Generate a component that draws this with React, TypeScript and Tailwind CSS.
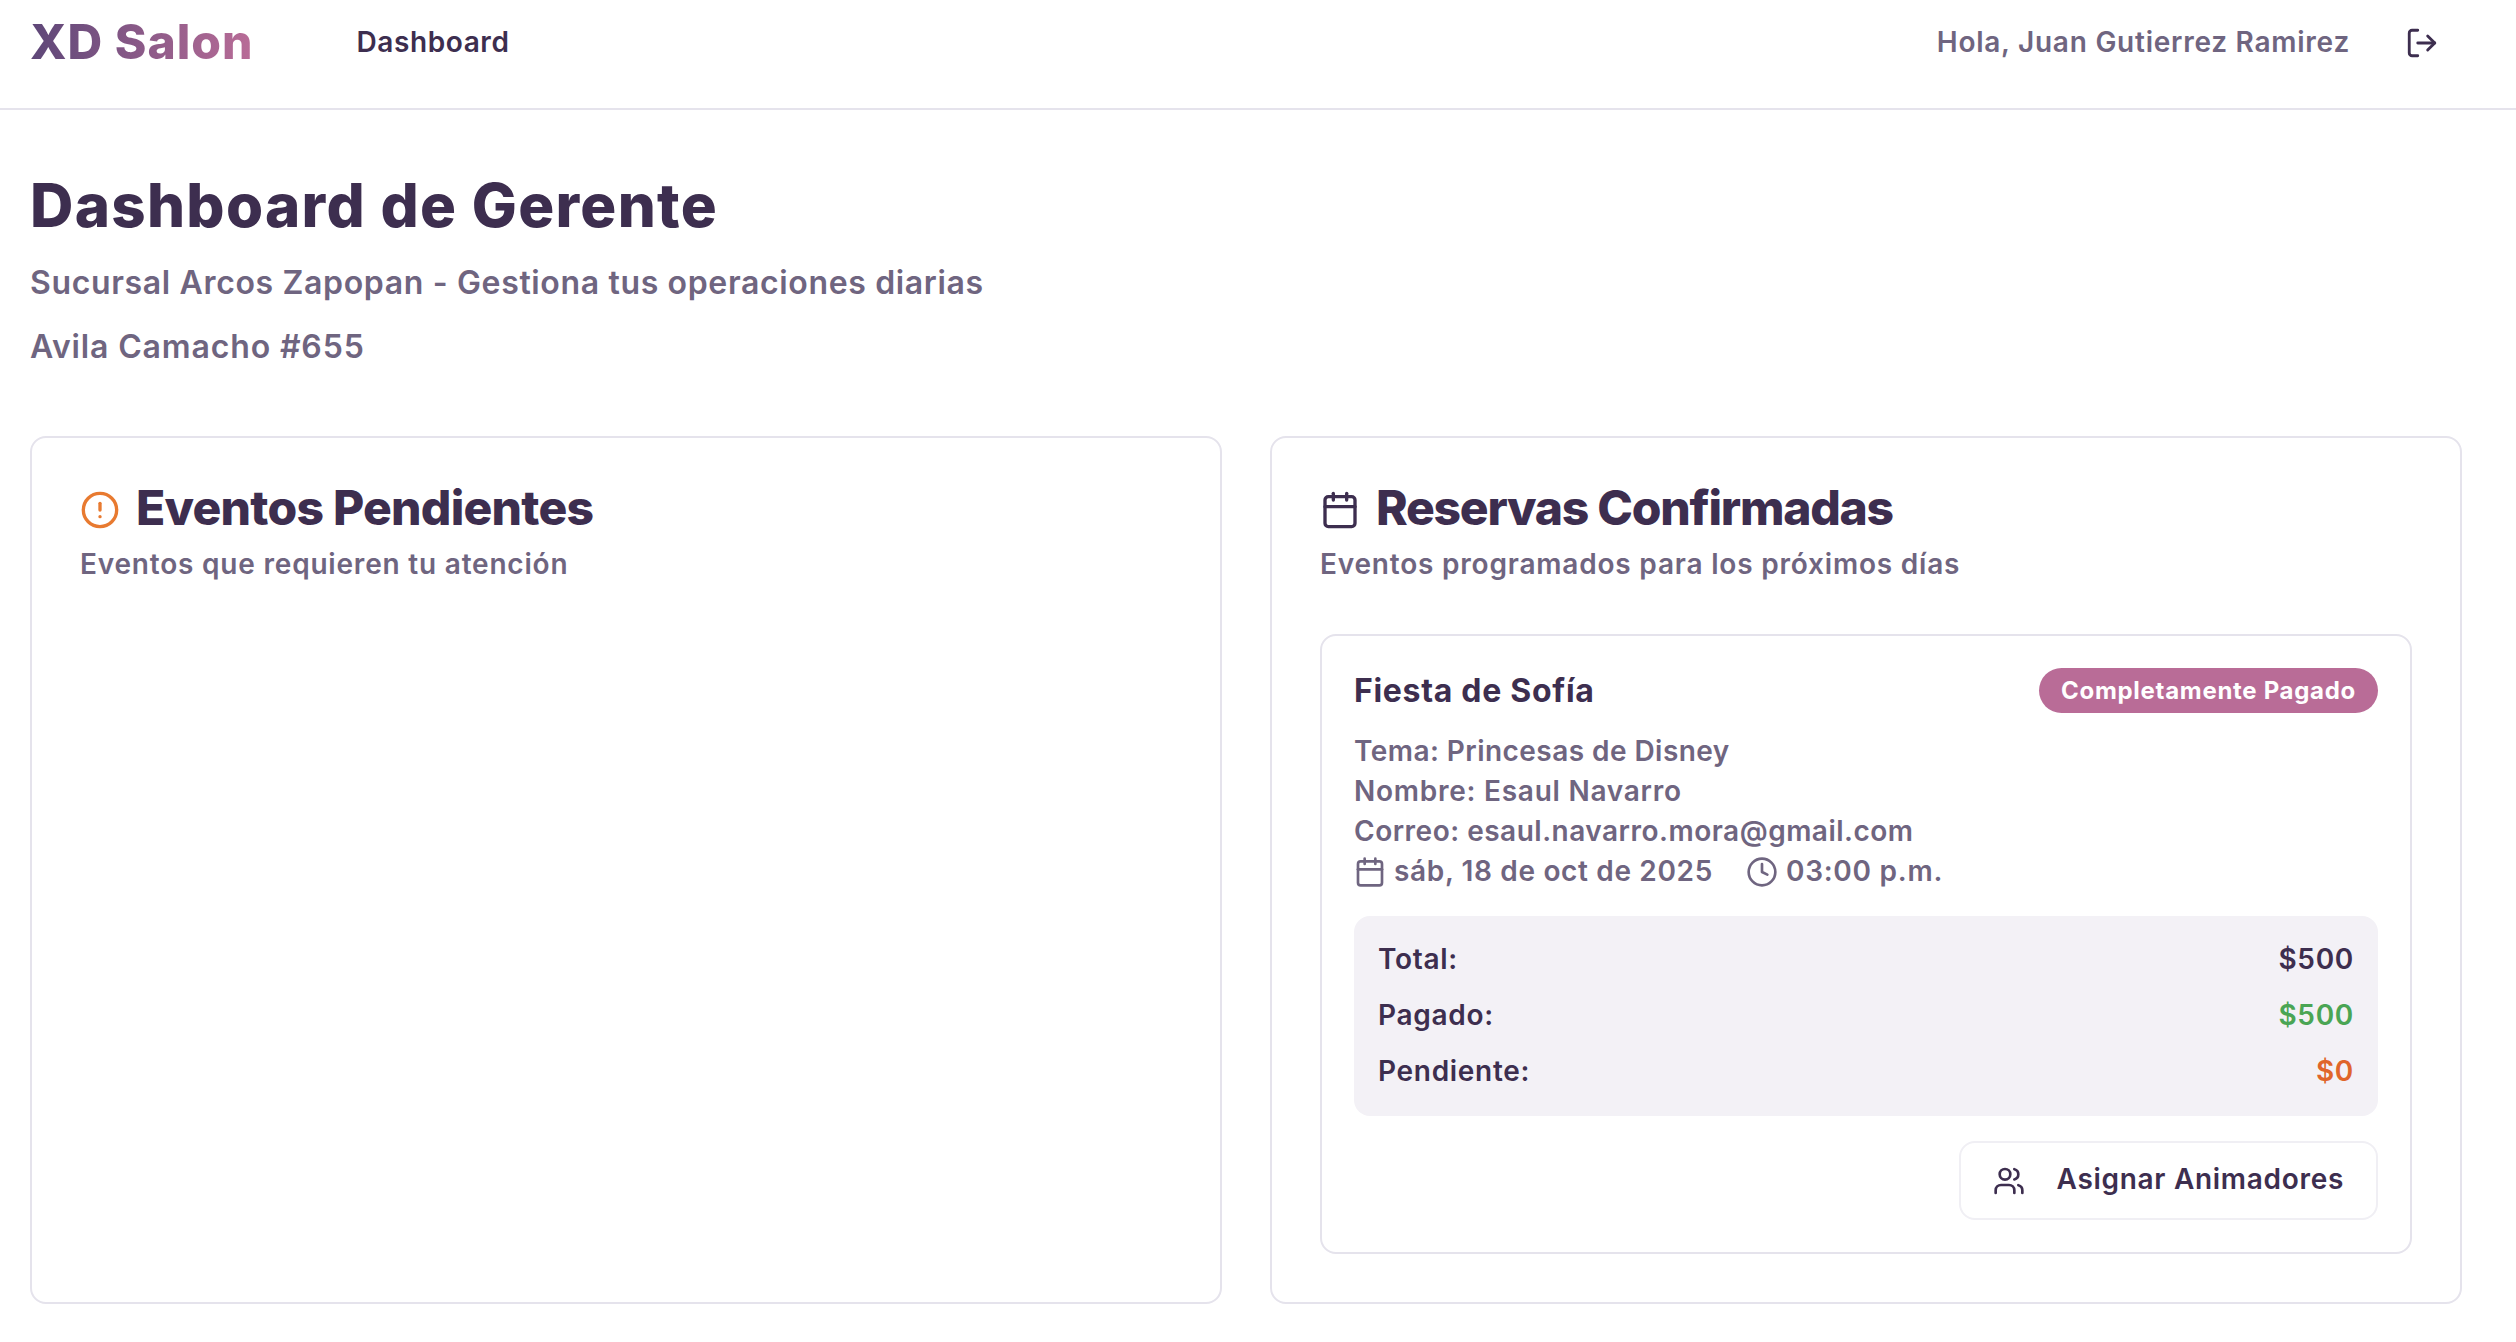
import { Calendar, CircleAlert, Clock, LogOut, Users } from 'lucide-react'

const font = { fontFamily: 'Inter, "Liberation Sans", sans-serif' }

function Money({ label, value, color }: { label: string; value: string; color: string }) {
  return (
    <div className="flex items-center justify-between text-[28px] leading-[40px] font-semibold tracking-[0.7px] text-[#3d2e4f]">
      <span>{label}</span>
      <span className={color}>{value}</span>
    </div>
  )
}

export default function App() {
  return (
    <div style={font} className="min-h-[1342px] bg-white">
      {/* Top bar */}
      <header className="flex h-[110px] items-center justify-between border-b-2 border-[#e5e3ec] pb-[24px] pl-[30px] pr-[77px]">
        <div className="flex items-center">
          <span className="bg-linear-to-r from-[#5e4778] to-[#b96c97] bg-clip-text text-[48px] leading-[56px] font-extrabold tracking-[1px] text-transparent">
            XD Salon
          </span>
          <nav className="ml-[103px] text-[28px] leading-[40px] font-semibold tracking-[0.6px] text-[#3d2e4f]">Dashboard</nav>
        </div>
        <div className="flex items-center gap-[55px]">
          <span className="text-[28px] leading-[40px] font-semibold tracking-[0.75px] text-[#6f6580]">Hola, Juan Gutierrez Ramirez</span>
          <LogOut className="mt-[2px] h-[34px] w-[34px] text-[#3d2e4f]" strokeWidth={2} />
        </div>
      </header>

      <main className="pb-[32px] pl-[30px] pr-[54px] pt-[59px]">
        <h1 className="text-[60px] leading-[72px] font-extrabold tracking-[1.3px] text-[#3d2e4f]">Dashboard de Gerente</h1>
        <p className="mt-[18px] text-[32px] leading-[48px] font-semibold tracking-[0.65px] text-[#6f6580]">
          Sucursal Arcos Zapopan - Gestiona tus operaciones diarias
        </p>
        <p className="mt-[16px] text-[32px] leading-[48px] font-semibold tracking-[0.85px] text-[#6f6580]">Avila Camacho #655</p>

        <div className="mt-[65px] grid grid-cols-2 gap-[48px]">
          {/* Pending events */}
          <section className="rounded-[16px] border-2 border-[#e5e3ec] p-[48px]">
            <h2 className="flex h-[48px] items-center gap-[16px] text-[48px] leading-[48px] font-extrabold tracking-[-0.75px] text-[#3d2e4f]">
              <CircleAlert className="h-[40px] w-[40px] text-[#e87a30]" strokeWidth={2} />
              <span className="pb-[5px]">Eventos Pendientes</span>
            </h2>
            <p className="mt-[10px] text-[28px] leading-[40px] font-semibold tracking-[0.8px] text-[#6f6580]">
              Eventos que requieren tu atención
            </p>
          </section>

          {/* Confirmed bookings */}
          <section className="rounded-[16px] border-2 border-[#e5e3ec] p-[48px]">
            <h2 className="flex h-[48px] items-center gap-[16px] text-[48px] leading-[48px] font-extrabold tracking-[-1.25px] text-[#3d2e4f]">
              <Calendar className="h-[40px] w-[40px] text-[#3d2e4f]" strokeWidth={2} />
              <span className="pb-[5px]">Reservas Confirmadas</span>
            </h2>
            <p className="mt-[10px] text-[28px] leading-[40px] font-semibold tracking-[0.8px] text-[#6f6580]">
              Eventos programados para los próximos días
            </p>

            <div className="mt-[50px] rounded-[16px] border-2 border-[#e5e3ec] p-[32px]">
              <div className="flex h-[45px] items-center justify-between">
                <h3 className="text-[32px] leading-[45px] font-bold tracking-[0.7px] text-[#3d2e4f]">Fiesta de Sofía</h3>
                <span className="rounded-full bg-[#b96c97] px-[22px] py-[6px] text-[24px] leading-[33px] font-bold tracking-[0.7px] text-white">
                  Completamente Pagado
                </span>
              </div>

              <div className="mt-[18px] text-[28px] leading-[40px] font-semibold tracking-[0.6px] text-[#6f6580]">
                <p className="tracking-[0.45px]">Tema: Princesas de Disney</p>
                <p className="tracking-[0.75px]">Nombre: Esaul Navarro</p>
                <p className="tracking-[0.5px]">Correo: esaul.navarro.mora@gmail.com</p>
                <div className="flex items-center">
                  <Calendar className="mr-[8px] mt-[2px] h-[32px] w-[32px]" strokeWidth={2} />
                  <span className="tracking-[0.65px]">sáb, 18 de oct de 2025</span>
                  <Clock className="ml-[33px] mr-[8px] mt-[2px] h-[32px] w-[32px]" strokeWidth={2} />
                  <span className="tracking-[0.75px]">03:00 p.m.</span>
                </div>
              </div>

              <div className="mt-[25px] flex flex-col gap-[16px] rounded-[16px] bg-[#f3f1f6] px-[24px] pb-[25px] pt-[23px]">
                <Money label="Total:" value="$500" color="text-[#3d2e4f]" />
                <Money label="Pagado:" value="$500" color="text-[#4aa554]" />
                <Money label="Pendiente:" value="$0" color="text-[#e0652a]" />
              </div>

              <div className="mt-[25px] flex justify-end">
                <button className="flex h-[79px] items-center gap-[32px] rounded-[16px] border-2 border-[#f0eff4] px-[32px] text-[28px] leading-[40px] font-semibold tracking-[0.7px] text-[#3d2e4f]">
                  <Users className="h-[32px] w-[32px]" strokeWidth={2} />
                  <span className="pb-[3px]">Asignar Animadores</span>
                </button>
              </div>
            </div>
          </section>
        </div>
      </main>
    </div>
  )
}
